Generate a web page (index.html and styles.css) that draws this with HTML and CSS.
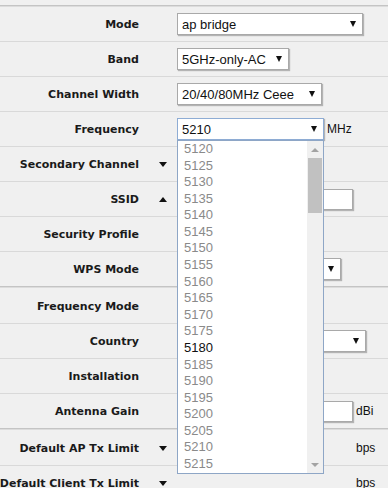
FILE: index.html
```html
<!DOCTYPE html>
<html lang="en">
<head>
    <meta charset="UTF-8">
    <title>Wireless</title>
    <link rel="stylesheet" href="styles.css">
</head>
<body>
    <div class="page">
        <div class="topline"></div>

        <div class="group">
            <div class="row">
                <div class="lbl">Mode</div><div class="tog"></div>
                <div class="val"><div class="sel w-mode"><span>ap bridge</span><i class="arr"></i></div></div>
            </div>
            <div class="row">
                <div class="lbl">Band</div><div class="tog"></div>
                <div class="val"><div class="sel w-band"><span>5GHz-only-AC</span><i class="arr"></i></div></div>
            </div>
            <div class="row">
                <div class="lbl">Channel Width</div><div class="tog"></div>
                <div class="val"><div class="sel w-width"><span>20/40/80MHz Ceee</span><i class="arr"></i></div></div>
            </div>
            <div class="row">
                <div class="lbl">Frequency</div><div class="tog"></div>
                <div class="val"><div class="sel w-freq focus"><span>5210</span><i class="arr"></i></div><span class="unit">MHz</span></div>
            </div>
            <div class="row">
                <div class="lbl">Secondary Channel</div><div class="tog down"></div>
                <div class="val"></div>
            </div>
            <div class="row">
                <div class="lbl">SSID</div><div class="tog up"></div>
                <div class="val"><div class="inp"></div></div>
            </div>
            <div class="row">
                <div class="lbl">Security Profile</div><div class="tog"></div>
                <div class="val"><div class="sel w-sec"><span></span><i class="arr"></i></div></div>
            </div>
            <div class="row">
                <div class="lbl">WPS Mode</div><div class="tog"></div>
                <div class="val"><div class="sel w-wps"><span></span><i class="arr"></i></div></div>
            </div>
        </div>

        <div class="group">
            <div class="row">
                <div class="lbl">Frequency Mode</div><div class="tog"></div>
                <div class="val"><div class="sel w-fmode"><span></span><i class="arr"></i></div></div>
            </div>
            <div class="row">
                <div class="lbl">Country</div><div class="tog"></div>
                <div class="val"><div class="sel w-country"><span></span><i class="arr"></i></div></div>
            </div>
            <div class="row">
                <div class="lbl">Installation</div><div class="tog"></div>
                <div class="val"><div class="sel w-inst"><span></span><i class="arr"></i></div></div>
            </div>
            <div class="row">
                <div class="lbl">Antenna Gain</div><div class="tog"></div>
                <div class="val"><div class="inp"></div><span class="unit">dBi</span></div>
            </div>
        </div>

        <div class="group">
            <div class="row">
                <div class="lbl">Default AP Tx Limit</div><div class="tog down"></div>
                <div class="val"><div class="blank"></div><span class="unit">bps</span></div>
            </div>
            <div class="row">
                <div class="lbl">Default Client Tx Limit</div><div class="tog down"></div>
                <div class="val"><div class="blank"></div><span class="unit">bps</span></div>
            </div>
        </div>

        <!-- open frequency list -->
        <div class="drop">
            <div class="opts">
                <div class="opt">5120</div>
                <div class="opt">5125</div>
                <div class="opt">5130</div>
                <div class="opt">5135</div>
                <div class="opt">5140</div>
                <div class="opt">5145</div>
                <div class="opt">5150</div>
                <div class="opt">5155</div>
                <div class="opt">5160</div>
                <div class="opt">5165</div>
                <div class="opt">5170</div>
                <div class="opt">5175</div>
                <div class="opt hot">5180</div>
                <div class="opt">5185</div>
                <div class="opt">5190</div>
                <div class="opt">5195</div>
                <div class="opt">5200</div>
                <div class="opt">5205</div>
                <div class="opt">5210</div>
                <div class="opt">5215</div>
            </div>
            <div class="sb">
                <div class="sb-btn"><i class="sb-up"></i></div>
                <div class="sb-thumb"></div>
                <div class="sb-track"></div>
                <div class="sb-btn"><i class="sb-down"></i></div>
            </div>
        </div>
    </div>
</body>
</html>
```

FILE: styles.css
```css
body {
    margin: 0;
    background-color: #f0f0f0;
    font-family: "DejaVu Sans", Verdana, sans-serif;
    color: #1a1a1a;
}

.page {
    position: relative;
    height: 488px;
    overflow: hidden;
    padding-top: 5px;
    box-sizing: border-box;
}

.topline {
    height: 1px;
    background-color: #c4c4c4;
    border-bottom: 1px solid #dcdcdc;
}

.group + .group {
    border-top: 1px solid #dcdcdc;
    padding-top: 1px;
}

.row {
    display: grid;
    grid-template-columns: 139px 38px 1fr;
    align-items: center;
    height: 34px;
    border-bottom: 1px solid #d9d9d9;
}

.group .row:last-child {
    border-bottom-color: #c4c4c4;
}

.lbl {
    display: flex;
    justify-content: flex-end;
    white-space: nowrap;
    font-size: 11px;
    font-weight: bold;
}

.tog {
    display: flex;
    padding-left: 20px;
}

.tog.down::before {
    content: "";
    border-left: 4px solid transparent;
    border-right: 4px solid transparent;
    border-top: 5px solid #111;
}

.tog.up::before {
    content: "";
    border-left: 4px solid transparent;
    border-right: 4px solid transparent;
    border-bottom: 5px solid #111;
}

.val {
    display: flex;
    align-items: center;
    gap: 3px;
    font-family: "Liberation Sans", Arial, sans-serif;
    font-size: 13px;
    white-space: nowrap;
}

.sel {
    display: flex;
    align-items: center;
    justify-content: space-between;
    box-sizing: border-box;
    height: 22px;
    padding: 0 6px 0 4px;
    background-color: #fff;
    border: 1px solid #a9a9a9;
    box-shadow: 1px 1px 1px rgba(0,0,0,0.25);
    color: #111;
    overflow: hidden;
}

.sel.focus {
    border-color: #8eacd4;
}

.arr {
    flex: none;
    border-left: 3.5px solid transparent;
    border-right: 3.5px solid transparent;
    border-top: 6px solid #111;
}

.w-mode { width: 186px; }
.w-band { width: 112px; }
.w-width { width: 145px; }
.w-freq { width: 147px; }
.w-sec { width: 110px; }
.w-wps { width: 164px; }
.w-fmode { width: 140px; }
.w-country { width: 189px; }
.w-inst { width: 100px; }

.inp {
    box-sizing: border-box;
    width: 176px;
    height: 21px;
    background-color: #fff;
    border: 1px solid #a9a9a9;
    box-shadow: 1px 1px 1px rgba(0,0,0,0.25);
}

.blank {
    width: 176px;
    height: 21px;
}

.unit {
    font-size: 12px;
    color: #111;
}

.drop {
    position: absolute;
    left: 177px;
    top: 140px;
    width: 147px;
    height: 334px;
    box-sizing: border-box;
    display: flex;
    background-color: #fff;
    border: 1px solid #8ea6c6;
    font-family: "Liberation Sans", Arial, sans-serif;
    font-size: 13px;
}

.opts {
    flex: 1;
    padding-left: 6px;
}

.opt {
    height: 16.58px;
    line-height: 16.58px;
    color: #8a8a8a;
}

.opt.hot {
    color: #111;
}

.sb {
    width: 16px;
    display: flex;
    flex-direction: column;
    align-items: center;
    background-color: #f0f0f0;
}

.sb-btn {
    height: 17px;
    display: flex;
    align-items: center;
    justify-content: center;
}

.sb-up {
    border-left: 4px solid transparent;
    border-right: 4px solid transparent;
    border-bottom: 4px solid #a3a3a3;
}

.sb-down {
    border-left: 4px solid transparent;
    border-right: 4px solid transparent;
    border-top: 4px solid #a3a3a3;
}

.sb-thumb {
    width: 14px;
    height: 55px;
    background-color: #c1c1c1;
}

.sb-track {
    flex: 1;
}
```
